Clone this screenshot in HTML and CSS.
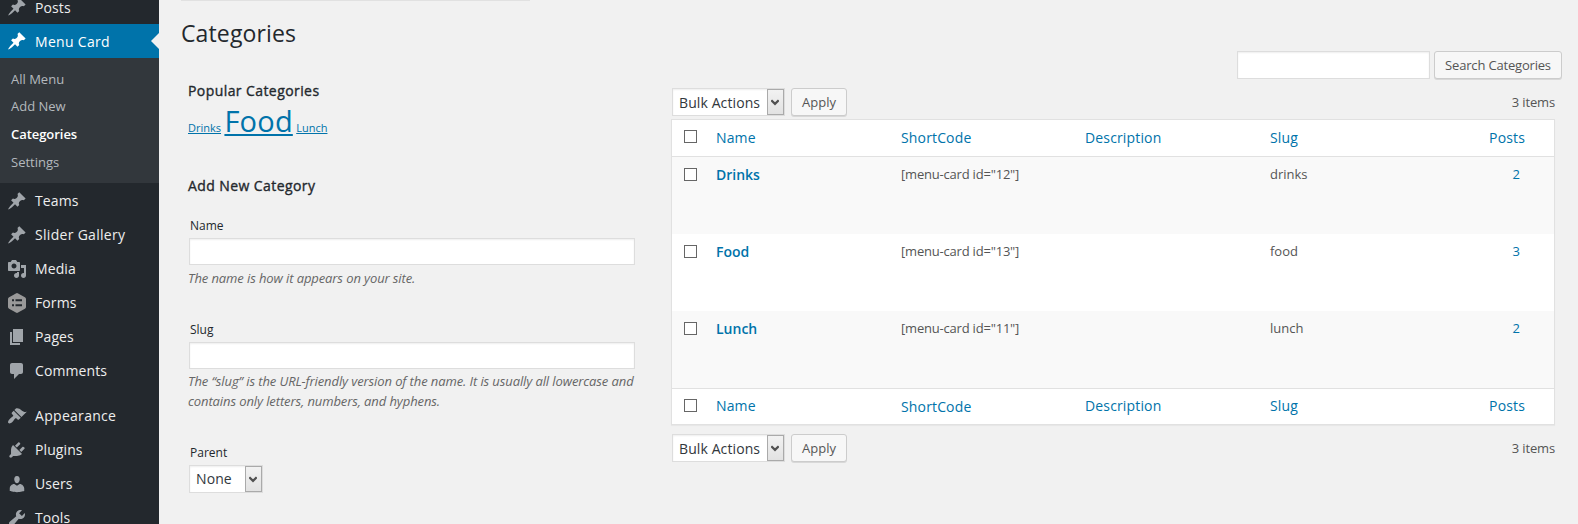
FILE: index.html
```html
<!DOCTYPE html>
<html lang="en">
<head>
<meta charset="utf-8">
<title>Categories</title>
<link rel="stylesheet" href="styles.css">
</head>
<body>
<svg class="defs" width="0" height="0">
  <symbol id="pin" viewBox="0 0 20 20"><path d="M10.44 3.02l1.82-1.82 6.36 6.35-1.83 1.82c-1.05-.68-2.48-.57-3.41.36l-.75.75c-.92.93-1.04 2.35-.35 3.41l-1.83 1.82-2.41-2.41-2.8 2.79c-.42.42-3.38 2.71-3.8 2.29s1.86-3.39 2.28-3.81l2.79-2.79L4.1 9.36l1.83-1.82c1.05.69 2.48.57 3.4-.36l.75-.75c.93-.92 1.05-2.35.36-3.41z"/></symbol>
  <symbol id="chev" viewBox="0 0 8 7"><path d="M0.3 1.2L4 4.9 7.7 1.2" fill="none" stroke="#505050" stroke-width="2.2"/></symbol>
</svg>
<div class="page">
  <nav class="sidebar">
    <a class="item"><svg class="icon"><use href="#pin"/></svg>Posts</a>
    <a class="item current wide"><svg class="icon"><use href="#pin"/></svg>Menu Card</a>
    <div class="submenu">
      <a class="sub">All Menu</a>
      <a class="sub">Add New</a>
      <a class="sub active">Categories</a>
      <a class="sub">Settings</a>
    </div>
    <a class="item"><svg class="icon"><use href="#pin"/></svg>Teams</a>
    <a class="item wide"><svg class="icon"><use href="#pin"/></svg>Slider Gallery</a>
    <a class="item"><svg class="icon" viewBox="0 0 20 20"><path d="M13 11V4c0-.55-.45-1-1-1h-1.67L9 1H5L3.67 3H2c-.55 0-1 .45-1 1v7c0 .55.45 1 1 1h10c.55 0 1-.45 1-1zM7 4.5c1.38 0 2.5 1.12 2.5 2.5S8.38 9.5 7 9.5 4.5 8.38 4.5 7 5.62 4.5 7 4.5zM14 6h5v10.5c0 1.38-1.12 2.5-2.5 2.5S14 17.88 14 16.5s1.12-2.5 2.5-2.5c.17 0 .34.02.5.05V9h-3V6zm-4 8.05V13h2v3.5c0 1.38-1.12 2.5-2.5 2.5S7 17.88 7 16.5 8.12 14 9.5 14c.17 0 .34.02.5.05z"/></svg>Media</a>
    <a class="item"><svg class="icon" viewBox="0 0 20 20"><path fill="#999" fill-rule="evenodd" d="M8.9.4Q10-.2 11.1.4l6.8 3.8Q19 4.8 19 6v8q0 1.200-1.100 1.800l-6.800 3.800Q10 20.200 8.900 19.600L2.100 15.800Q1 15.200 1 14V6q0-1.200 1.100-1.800zM5 6.300v2h2v-2zM8.500 6.300v2H15v-2zM5 11.300v2h2v-2zM8.500 11.300v2H15v-2z"/></svg>Forms</a>
    <a class="item"><svg class="icon" viewBox="0 0 20 20"><path d="M6 15V2h10v13H6zm-1 1h8v2H3V5h2v11z"/></svg>Pages</a>
    <a class="item"><svg class="icon" viewBox="0 0 20 20"><path d="M5 2h9c1.100 0 2 .9 2 2v7c0 1.100-.9 2-2 2h-2l-5 5v-5H5c-1.100 0-2-.9-2-2V4c0-1.100.9-2 2-2z"/></svg>Comments</a>
    <div class="separator"></div>
    <a class="item wide"><svg class="icon" viewBox="0 0 20 20"><path d="M14.480 11.060L7.410 3.990l1.500-1.500c.5-.56 2.300-.47 3.510.32 1.210.8 1.430 1.280 2.910 2.100 1.180.64 2.450 1.260 4.450.85zm-.71.71L6.700 4.700 4.930 6.470c-.39.39-.39 1.020 0 1.410l1.060 1.060c.39.39.39 1.030 0 1.420-.6.6-1.430 1.110-2.210 1.690-.35.26-.7.53-1.010.84C1.430 14.230.4 16.080 1.400 17.070c.99 1 2.840-.03 4.180-1.360.31-.31.58-.66.85-1.020.57-.78 1.080-1.610 1.690-2.210.39-.39 1.020-.39 1.410 0l1.060 1.060c.39.39 1.020.39 1.410 0z"/></svg>Appearance</a>
    <a class="item"><svg class="icon" viewBox="0 0 20 20"><path d="M13.110 4.360L9.870 7.600 8 5.730l3.240-3.240c.35-.34 1.050-.2 1.560.32.52.51.66 1.210.31 1.550zm-8 1.770l.91-1.120 9.010 9.010-1.190.84c-.71.71-2.630 1.160-3.820 1.160H6.140L4.900 17.260c-.59.59-1.540.59-2.120 0-.59-.58-.59-1.530 0-2.120l1.240-1.240v-3.880c0-1.130.4-3.190 1.090-3.890zm7.260 3.970l3.240-3.240c.34-.35 1.040-.21 1.550.31.52.51.66 1.210.31 1.550l-3.240 3.250z"/></svg>Plugins</a>
    <a class="item"><svg class="icon" viewBox="0 0 20 20"><path d="M10 9.250c-2.270 0-2.730-3.440-2.730-3.440C7 4.020 7.820 2 9.970 2c2.160 0 2.980 2.020 2.710 3.810 0 0-.41 3.440-2.680 3.440zm0 2.570L12.720 10c2.390 0 4.520 2.330 4.520 4.530v2.490s-3.650 1.130-7.240 1.130c-3.650 0-7.240-1.130-7.240-1.130v-2.490c0-2.250 1.940-4.480 4.470-4.480z"/></svg>Users</a>
    <a class="item"><svg class="icon" viewBox="0 0 20 20"><path d="M16.680 9.770c-1.340 1.340-3.300 1.670-4.950.99l-5.410 6.520c-.99.99-2.590.99-3.580 0s-.99-2.590 0-3.570l6.520-5.420c-.68-1.650-.35-3.610.99-4.950 1.280-1.280 3.120-1.620 4.720-1.060l-2.890 2.890 2.820 2.820 2.860-2.870c.53 1.580.18 3.390-1.080 4.650z"/></svg>Tools</a>
  </nav>

  <main class="content">
    <div class="notice-edge"></div>
    <section class="left">
      <h1 class="title">Categories</h1>
      <h2 class="heading">Popular Categories</h2>
      <p class="cloud"><a class="tag">Drinks</a> <a class="tag big">Food</a> <a class="tag">Lunch</a></p>
      <h2 class="heading">Add New Category</h2>
      <form class="form">
        <div class="field name">
          <label class="label">Name</label>
          <input class="input" type="text">
          <p class="hint">The name is how it appears on your site.</p>
        </div>
        <div class="field slug">
          <label class="label">Slug</label>
          <input class="input" type="text">
          <p class="hint">The “slug” is the URL-friendly version of the name. It is usually all lowercase and<br>contains only letters, numbers, and hyphens.</p>
        </div>
        <div class="field">
          <label class="label">Parent</label>
          <div class="select parent"><span>None</span><i class="drop"><svg width="8" height="7"><use href="#chev"/></svg></i></div>
        </div>
      </form>
    </section>

    <section class="right">
      <div class="search"><input class="input" type="text"><button class="button" type="button">Search Categories</button></div>
      <div class="tablenav">
        <div class="select bulk"><span>Bulk Actions</span><i class="drop"><svg width="8" height="7"><use href="#chev"/></svg></i></div>
        <button class="button apply" type="button">Apply</button>
        <span class="count">3 items</span>
      </div>
      <div class="table">
        <div class="row head top"><i class="check"></i><a>Name</a><a>ShortCode</a><a>Description</a><a>Slug</a><a class="posts">Posts</a></div>
        <div class="row odd"><i class="check"></i><a class="strong">Drinks</a><span class="code">[menu-card id="12"]</span><span></span><span>drinks</span><a class="posts num">2</a></div>
        <div class="row"><i class="check"></i><a class="strong">Food</a><span class="code">[menu-card id="13"]</span><span></span><span>food</span><a class="posts num">3</a></div>
        <div class="row odd"><i class="check"></i><a class="strong">Lunch</a><span class="code">[menu-card id="11"]</span><span></span><span>lunch</span><a class="posts num">2</a></div>
        <div class="row head foot"><i class="check"></i><a>Name</a><a class="low">ShortCode</a><a>Description</a><a>Slug</a><a class="posts">Posts</a></div>
      </div>
      <div class="tablenav bottom">
        <div class="select bulk"><span>Bulk Actions</span><i class="drop"><svg width="8" height="7"><use href="#chev"/></svg></i></div>
        <button class="button apply" type="button">Apply</button>
        <span class="count">3 items</span>
      </div>
    </section>
  </main>
</div>
</body>
</html>
```
FILE: styles.css
```css
* { box-sizing: border-box; margin: 0; padding: 0; }
body {
  background: #f1f1f1;
  color: #555;
  font: 13px/20px "Open Sans", sans-serif;
  overflow: hidden;
}
.defs { display: none; }
.page { display: flex; height: 524px; overflow: hidden; }

.sidebar {
  flex: none;
  width: 159px;
  height: 544px;
  margin-top: -10px;
  background: #23282d;
}
.item {
  display: flex;
  position: relative;
  height: 34px;
  padding: 7px 0 0 7px;
  gap: 8px;
  color: #eee;
  font-size: 14px;
  line-height: 20px;
  letter-spacing: .1px;
  white-space: nowrap;
}
.wide { letter-spacing: .3px; }
.icon { flex: none; width: 20px; height: 20px; fill: #a0a5aa; }
.item:first-child, .current { line-height: 22px; }
.current { background: #0073aa; color: #fff; }
.current .icon { fill: #fff; }
.current::after {
  content: "";
  position: absolute;
  right: 0;
  top: 9px;
  border: 8px solid transparent;
  border-left: 0;
  border-right-color: #f1f1f1;
}
.submenu {
  height: 125px;
  margin-bottom: 1px;
  padding: 7px 0 0 11px;
  background: #32373c;
}
.sub { display: block; height: 28px; color: #b4b9be; line-height: 28px; }
.sub:first-child { height: 27px; }
.active { color: #fff; font-weight: 600; letter-spacing: -.05px; }
.separator { height: 11px; }

.content {
  display: flex;
  position: relative;
  flex: 1;
}
.notice-edge {
  position: absolute;
  left: 22px;
  top: 0;
  width: 349px;
  height: 1px;
  background: #e1e1e1;
}
.left { width: 512px; padding: 17px 0 0 29px; }
.title {
  margin-left: -7px;
  color: #23282d;
  font-size: 23px;
  font-weight: 400;
  line-height: 33px;
  letter-spacing: .13px;
}
.heading {
  color: #23282d;
  font-size: 14px;
  font-weight: 400;
  line-height: 20px;
  letter-spacing: .42px;
  -webkit-text-stroke: .35px #23282d;
}
.title + .heading { margin-top: 31px; }
.cloud { height: 75px; line-height: 39px; white-space: nowrap; }
.tag { color: #0073aa; font-size: 11px; text-decoration: underline; }
.big { font-size: 29px; letter-spacing: .2px; }

.form { padding-top: 20px; }
.name { height: 104px; }
.slug { height: 123px; }
.label { display: block; height: 22px; padding-left: 2px; color: #23282d; font-size: 12px; line-height: 20px; }
.input {
  display: block;
  height: 27px;
  border: 1px solid #ddd;
  background: #fff;
  box-shadow: inset 0 1px 2px rgba(0, 0, 0, .07);
}
.field .input { width: 446px; margin-left: 1px; }
.hint { padding-top: 3px; color: #666; font-style: italic; letter-spacing: -.1px; white-space: nowrap; }
.slug .hint { padding-top: 2px; }
.select {
  display: flex;
  justify-content: space-between;
  height: 28px;
  padding-left: 6px;
  border: 1px solid #ddd;
  background: #fff;
  box-shadow: inset 0 1px 2px rgba(0, 0, 0, .07);
  color: #32373c;
  font-size: 14px;
  line-height: 27px;
  letter-spacing: .1px;
  white-space: nowrap;
}
.parent { width: 74px; margin-left: 1px; line-height: 25px; }
.bulk { width: 113px; }
.drop {
  display: flex;
  align-items: center;
  justify-content: center;
  width: 17px;
  height: 26px;
  padding-right: 1px;
  border: 1px solid #aaa;
  background: linear-gradient(#f2f2f2, #e2e2e2);
}

.right { width: 891px; padding-top: 51px; }
.search { display: flex; justify-content: flex-end; gap: 4px; }
.search .input { width: 193px; height: 28px; }
.button {
  height: 28px;
  border: 1px solid #ccc;
  border-radius: 3px;
  background: #f7f7f7;
  box-shadow: 0 1px 0 #d8d8d8;
  color: #555;
  font: 13px/26px "Open Sans", sans-serif;
  letter-spacing: -.18px;
  white-space: nowrap;
}
.search .button { width: 128px; }
.tablenav { display: flex; width: 884px; padding: 9px 0 2px 1px; }
.bottom { padding-top: 9px; }
.apply { width: 56px; margin-left: 6px; letter-spacing: 0; }
.count { margin-left: auto; line-height: 29px; letter-spacing: -.15px; }
.table { width: 884px; border: 1px solid #e1e1e1; background: #fff; box-shadow: 0 1px 1px rgba(0, 0, 0, .04); }
.row {
  display: grid;
  grid-template-columns: 44px 185px 184px 185px 195px 60px;
  height: 77px;
  padding-top: 7px;
}
.row a { color: #0073aa; }
.odd { background: #f9f9f9; }
.head { height: 37px; border-bottom: 1px solid #e1e1e1; font-size: 14px; letter-spacing: .15px; }
.top { line-height: 22px; }
.foot { height: 36px; border-top: 1px solid #e1e1e1; border-bottom: 0; }
.low { padding-top: 1px; }
.code { letter-spacing: -.2px; }
.check { width: 13px; height: 13px; margin: 4px 0 0 12px; border: 1px solid #666; background: #fff; }
.head .check { margin-top: 3px; }
.strong { font-size: 14px; font-weight: 600; line-height: 22px; }
.posts { text-align: right; }
.num { padding-right: 5px; }
```
